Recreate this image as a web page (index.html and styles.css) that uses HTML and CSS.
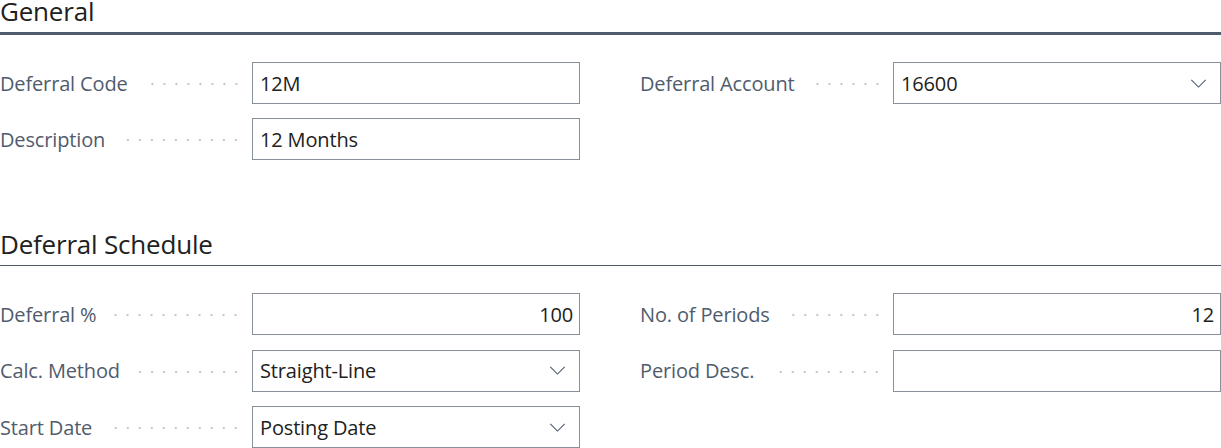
FILE: index.html
```html
<!DOCTYPE html>
<html>
<head>
<meta charset="utf-8">
<link rel="stylesheet" href="styles.css">
</head>
<body>
<section class="group first">
  <h2 class="group-title">General</h2>
  <div class="rule thick"></div>
  <div class="grid">
    <div class="col">
      <div class="field">
        <span class="label">Deferral Code</span><span class="dots"></span>
        <div class="box"><span class="value">12M</span></div>
      </div>
      <div class="field">
        <span class="label">Description</span><span class="dots"></span>
        <div class="box"><span class="value">12 Months</span></div>
      </div>
    </div>
    <div class="col">
      <div class="field">
        <span class="label">Deferral Account</span><span class="dots"></span>
        <div class="box select"><span class="value">16600</span>
          <svg class="chev" viewBox="0 0 18 10"><path d="M1 1 L9 9 L17 1" fill="none" stroke="#505c6d" stroke-width="1.2"/></svg>
        </div>
      </div>
    </div>
  </div>
</section>
<section class="group second">
  <h2 class="group-title">Deferral Schedule</h2>
  <div class="rule thin"></div>
  <div class="grid">
    <div class="col">
      <div class="field">
        <span class="label">Deferral %</span><span class="dots"></span>
        <div class="box num"><span class="value">100</span></div>
      </div>
      <div class="field">
        <span class="label">Calc. Method</span><span class="dots"></span>
        <div class="box select"><span class="value">Straight-Line</span>
          <svg class="chev" viewBox="0 0 18 10"><path d="M1 1 L9 9 L17 1" fill="none" stroke="#505c6d" stroke-width="1.2"/></svg>
        </div>
      </div>
      <div class="field">
        <span class="label">Start Date</span><span class="dots"></span>
        <div class="box select"><span class="value">Posting Date</span>
          <svg class="chev" viewBox="0 0 18 10"><path d="M1 1 L9 9 L17 1" fill="none" stroke="#505c6d" stroke-width="1.2"/></svg>
        </div>
      </div>
    </div>
    <div class="col">
      <div class="field">
        <span class="label">No. of Periods</span><span class="dots"></span>
        <div class="box num"><span class="value">12</span></div>
      </div>
      <div class="field">
        <span class="label">Period Desc.</span><span class="dots"></span>
        <div class="box"><span class="value"></span></div>
      </div>
    </div>
  </div>
</section>
</body>
</html>
```
FILE: styles.css
```css
html, body {
  margin: 0;
  padding: 0;
  background: #ffffff;
}
body {
  font-family: "Open Sans", "Noto Sans", "Liberation Sans", sans-serif;
  color: #212121;
  width: 1221px;
  height: 448px;
  overflow: hidden;
}
.group-title {
  margin: 0;
  font-weight: 500;
  font-size: 26px;
  line-height: 22px;
  color: #212121;
  letter-spacing: -0.2px;
}
.first .group-title {
  height: 32px;
}
.second {
  margin-top: 70px;
}
.second .group-title {
  height: 36px;
  line-height: 28px;
}
.rule {
  background: #505c6d;
}
.rule.thick {
  height: 3px;
}
.rule.thin {
  height: 1px;
  margin-top: -1px;
}
.first .grid {
  margin-top: 27px;
}
.second .grid {
  margin-top: 27px;
}
.grid {
  display: grid;
  grid-template-columns: 580px 581px;
  column-gap: 60px;
}
.col {
  display: flex;
  flex-direction: column;
  gap: 14px;
}
.second .col {
  gap: 14.5px;
}
.field {
  display: flex;
  align-items: center;
  height: 42px;
}
.label {
  font-size: 20px;
  color: #505c6d;
  white-space: nowrap;
  letter-spacing: -0.15px;
}
.dots {
  flex: 1;
  height: 4px;
  margin: 2px 10px 0 16px;
  background-image: radial-gradient(circle, #c4c6ca 1px, transparent 1.3px);
  background-size: 12px 4px;
  background-position: right center;
  background-repeat: repeat-x;
}
.box {
  flex: 0 0 328px;
  box-sizing: border-box;
  height: 42px;
  border: 1px solid #8a9099;
  display: flex;
  align-items: center;
  padding: 0 7px;
  font-size: 20px;
  color: #212121;
  letter-spacing: -0.15px;
}
.box.num {
  justify-content: flex-end;
  padding-right: 6px;
}
.box.select {
  justify-content: space-between;
  padding-right: 13px;
}
.chev {
  width: 17px;
  height: 9px;
  display: block;
}
```
